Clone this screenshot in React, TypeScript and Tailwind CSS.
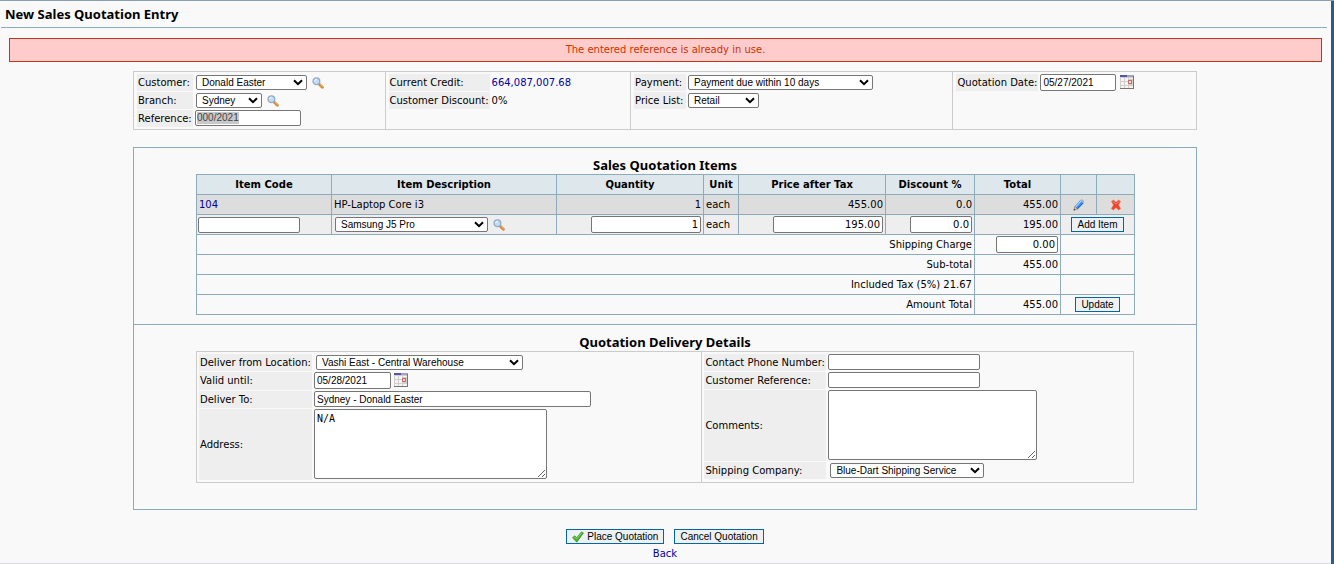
import React from 'react';

const FIELD =
  'block rounded-[2px] border border-[#767676] bg-white px-0.5 text-[10px] leading-3 text-black outline-none';
const SANS = "font-['Liberation_Sans',Arial,sans-serif]";
const TD = 'border border-[#8cacbb] px-0.5 py-0';

function SearchIcon() {
  return (
    <svg width="12" height="12" viewBox="0 0 12 12" aria-hidden="true">
      <path d="M7 7l3.4 3.3" stroke="#d08a35" strokeWidth="2.8" strokeLinecap="round" />
      <path d="M7.8 7l3 2.9" stroke="#f3c27a" strokeWidth="0.9" />
      <circle cx="4.4" cy="4.2" r="3.4" fill="#c3dcf6" stroke="#93abc8" strokeWidth="1.3" />
      <path d="M2.8 4a1.8 1.8 0 0 1 1.8-1.7" stroke="#fff" strokeWidth="0.9" fill="none" />
    </svg>
  );
}

function CalendarIcon() {
  return (
    <svg width="14" height="14" viewBox="0 0 14 14" shapeRendering="crispEdges" aria-hidden="true">
      <rect width="14" height="14" fill="#d3cfcd" />
      <path d="M1 3h3v3H1zM5 3h3v3H5zM9 3h4v1H9zM1 7h3v3H1zM5 7h3v3H5zM1 11h3v2H1zM5 11h3v2H5zM9 11h4v2H9z" fill="#f6f4f3" />
      <rect width="7" height="2" fill="#5454ae" />
      <rect x="7" width="7" height="2" fill="#a2a2b8" />
      <rect x="8" y="5" width="4" height="4" fill="#c4716d" />
      <rect x="9" y="6" width="2" height="2" fill="#f6dcd8" />
      <path d="M13 1h1v13H0v-1h13z" fill="#77736f" />
    </svg>
  );
}

function PencilIcon() {
  return (
    <svg width="12" height="12" viewBox="0 0 12 12" aria-hidden="true">
      <path d="M.9 11.1l1-3.9L4.8 10z" fill="#e3bd92" stroke="#77736f" strokeWidth="0.6" />
      <path d="M1.8 7.3L7.2 1.2l3.4 3L4.8 10.2z" fill="#3b8ee8" />
      <path d="M2.8 7.9l5.4-6" stroke="#a5d6fb" strokeWidth="1.2" />
      <path d="M4.4 9.9l5.8-6" stroke="#1e5fae" strokeWidth="0.9" />
      <path d="M7.2 1.2l.8-.7q.8-.6 1.7.2l1 .9q.8.8.2 1.6l-.5.8z" fill="#9fb0d6" />
      <path d="M.6 11.5l.5-1.8 1.3 1.2z" fill="#333" />
    </svg>
  );
}

function DeleteIcon() {
  return (
    <svg width="12" height="12" viewBox="0 0 12 12" aria-hidden="true">
      <path
        d="M1.3 2.3l2.2-1.4L6 3.2l2.5-2.3 2.2 1.4L8.6 6l2.2 3.7-2.2 1.4L6 8.8l-2.6 2.3L1.2 9.7 3.4 6z"
        fill="#e9452a"
        stroke="#f08a72"
        strokeWidth="0.6"
      />
      <path d="M2.6 2.4L6 5l3.4-2.6" stroke="#f9a08c" strokeWidth="0.7" fill="none" />
    </svg>
  );
}

function CheckIcon() {
  return (
    <svg width="12" height="12" viewBox="0 0 12 12" aria-hidden="true">
      <path d="M.5 6.6l2.4-1.8 1.7 1.9L9.4.9l2.1 1-6.7 9.3z" fill="#45b52e" stroke="#2a7d1b" strokeWidth="0.6" />
      <path d="M1.8 6.7l1-.7 1.7 1.9L9.7 2" stroke="#93dd7c" strokeWidth="0.8" fill="none" />
    </svg>
  );
}

function Select({ id, width, children, label }: { id: string; width: string; children: string; label?: string }) {
  return (
    <span className={`relative block ${width}`}>
      <select
        id={id}
        aria-label={label}
        className={`block h-[15px] w-full appearance-none rounded-[2px] border border-[#767676] bg-white pr-4 pl-[5px] text-[10px] leading-[13px] text-black ${SANS}`}
      >
        <option>{children}</option>
      </select>
      <svg className="pointer-events-none absolute top-[4px] right-[4px]" width="10" height="7" viewBox="0 0 10 7" aria-hidden="true">
        <path d="M1 1.2l4 4 4-4" stroke="#000" strokeWidth="2" fill="none" />
      </svg>
    </span>
  );
}

function Row({ id, label, width, height = 'h-[17px]', children }: {
  id?: string;
  label: string;
  width: string;
  height?: string;
  children: React.ReactNode;
}) {
  return (
    <div className={`flex items-center gap-0.5 ${height}`}>
      <label htmlFor={id} className={`flex h-full shrink-0 items-center bg-[#eeeeee] pl-px whitespace-nowrap ${width}`}>
        {label}
      </label>
      {children}
    </div>
  );
}

function IconButton({ label, children }: { label: string; children: React.ReactNode }) {
  return (
    <button type="button" aria-label={label} className="block cursor-pointer">
      {children}
    </button>
  );
}

function PushButton({ children }: { children: React.ReactNode }) {
  return (
    <button
      type="button"
      className={`inline-flex h-[15px] items-center gap-[3px] border border-[#0066a4] bg-[#edf1f4] px-[5px] align-middle text-[10px] leading-[13px] whitespace-nowrap text-black ${SANS}`}
    >
      {children}
    </button>
  );
}

function Heading({ children }: { children: string }) {
  return (
    <h2 className="text-center font-['Noto_Sans',sans-serif] text-[13px] leading-4 font-bold text-black">{children}</h2>
  );
}

function NumberField({ label, value, width }: { label: string; value: string; width: string }) {
  return <input aria-label={label} defaultValue={value} className={`${FIELD} ml-auto h-[17px] text-right ${width}`} />;
}

function OrderHeader() {
  return (
    <section className="mx-auto mt-[9px] grid w-4/5 grid-cols-[251fr_246fr_323fr_244fr] border border-[#cccccc]">
      <div className="flex flex-col gap-px px-[3px] py-0.5">
        <Row id="customer" label="Customer:" width="w-[56px]">
          <div className="flex items-center gap-[5px] pl-px">
            <Select id="customer" width="w-[111px]">Donald Easter</Select>
            <IconButton label="Search customers"><SearchIcon /></IconButton>
          </div>
        </Row>
        <Row id="branch" label="Branch:" width="w-[56px]">
          <div className="flex items-center gap-[5px] pl-px">
            <Select id="branch" width="w-[66px]">Sydney</Select>
            <IconButton label="Search branches"><SearchIcon /></IconButton>
          </div>
        </Row>
        <Row id="reference" label="Reference:" width="w-[56px]">
          <div className={`flex h-4 w-[106px] items-center self-start rounded-[2px] border border-[#767676] bg-white px-px ${SANS}`}>
            <input id="reference" defaultValue="000/2021" className="h-3 w-[42px] bg-[#c8c8c8] text-[10px] leading-3 text-[#444444] outline-none" />
          </div>
        </Row>
      </div>
      <div className="flex flex-col gap-px border-l border-[#cccccc] px-[3px] py-0.5">
        <Row label="Current Credit:" width="w-[101px]">
          <a href="#credit" className="text-[#0000a0]">664,087,007.68</a>
        </Row>
        <Row label="Customer Discount:" width="w-[101px]">
          <span>0%</span>
        </Row>
      </div>
      <div className="flex flex-col gap-px border-l border-[#cccccc] px-[3px] py-0.5">
        <Row id="payment" label="Payment:" width="w-[52px]">
          <Select id="payment" width="w-[185px]">Payment due within 10 days</Select>
        </Row>
        <Row id="pricelist" label="Price List:" width="w-[52px]">
          <Select id="pricelist" width="w-[71px]">Retail</Select>
        </Row>
      </div>
      <div className="flex flex-col gap-px border-l border-[#cccccc] px-[3px] py-0.5">
        <Row id="quotedate" label="Quotation Date:" width="w-[82px]">
          <input id="quotedate" defaultValue="05/27/2021" className={`${FIELD} ${SANS} h-[17px] w-[76px]`} />
          <div className="self-start pt-px pl-0.5"><IconButton label="Pick quotation date"><CalendarIcon /></IconButton></div>
        </Row>
      </div>
    </section>
  );
}

function ItemsTable() {
  const totals = [
    { label: 'Sub-total', value: '455.00' },
    { label: 'Included Tax (5%) 21.67', value: '' },
  ];
  return (
    <table className="w-full table-fixed border-collapse">
      <colgroup>
        <col className="w-[135px]" />
        <col className="w-[225px]" />
        <col className="w-[147px]" />
        <col className="w-[35px]" />
        <col className="w-[147px]" />
        <col className="w-[89px]" />
        <col className="w-[86px]" />
        <col className="w-[36px]" />
        <col className="w-[38px]" />
      </colgroup>
      <thead>
        <tr className="h-5 bg-[#dee7ec]">
          {['Item Code', 'Item Description', 'Quantity', 'Unit', 'Price after Tax', 'Discount %', 'Total', '', ''].map((h, i) => (
            <th key={i} className={`${TD} text-center font-bold whitespace-nowrap`}>{h}</th>
          ))}
        </tr>
      </thead>
      <tbody>
        <tr className="h-5 bg-[#dddddd]">
          <td className={TD}><a href="#104" className="text-[#0000a0]">104</a></td>
          <td className={TD}>HP-Laptop Core i3</td>
          <td className={`${TD} text-right`}>1</td>
          <td className={TD}>each</td>
          <td className={`${TD} text-right`}>455.00</td>
          <td className={`${TD} text-right`}>0.0</td>
          <td className={`${TD} text-right`}>455.00</td>
          <td className={TD}><div className="flex justify-center"><IconButton label="Edit line"><PencilIcon /></IconButton></div></td>
          <td className={TD}><div className="flex justify-center"><IconButton label="Remove line"><DeleteIcon /></IconButton></div></td>
        </tr>
        <tr className="h-5 bg-[#eeeeee]">
          <td className={`${TD} pl-px`}><input aria-label="Item code" className={`${FIELD} h-4 w-[102px]`} /></td>
          <td className={TD}>
            <div className="flex items-center gap-[5px] pl-px">
              <Select id="item" label="Item description" width="w-[153px]">Samsung J5 Pro</Select>
              <IconButton label="Search items"><SearchIcon /></IconButton>
            </div>
          </td>
          <td className={TD}><NumberField label="Quantity" value="1" width="w-[110px]" /></td>
          <td className={TD}>each</td>
          <td className={TD}><NumberField label="Price after tax" value="195.00" width="w-[110px]" /></td>
          <td className={TD}><NumberField label="Discount percent" value="0.0" width="w-[62px]" /></td>
          <td className={`${TD} text-right`}>195.00</td>
          <td className={TD} colSpan={2}><div className="flex justify-center"><PushButton>Add Item</PushButton></div></td>
        </tr>
        <tr className="h-5">
          <td className={`${TD} text-right`} colSpan={6}>Shipping Charge</td>
          <td className={TD}><NumberField label="Shipping charge" value="0.00" width="w-[62px]" /></td>
          <td className={TD} colSpan={2} />
        </tr>
        {totals.map((t) => (
          <tr key={t.label} className="h-5">
            <td className={`${TD} text-right`} colSpan={6}>{t.label}</td>
            <td className={`${TD} text-right`}>{t.value}</td>
            <td className={TD} colSpan={2} />
          </tr>
        ))}
        <tr className="h-5">
          <td className={`${TD} text-right`} colSpan={6}>Amount Total</td>
          <td className={`${TD} text-right`}>455.00</td>
          <td className={TD} colSpan={2}><div className="flex justify-center"><PushButton>Update</PushButton></div></td>
        </tr>
      </tbody>
    </table>
  );
}

function DeliveryDetails() {
  return (
    <div className="grid grid-cols-[506fr_433fr] border border-[#cccccc]">
      <div className="flex flex-col gap-px px-0.5 py-0.5">
        <Row id="location" label="Deliver from Location:" width="w-[113px]">
          <div className="pl-0.5"><Select id="location" width="w-[207px]">Vashi East - Central Warehouse</Select></div>
        </Row>
        <Row id="valid" label="Valid until:" width="w-[113px]" height="h-[18px]">
          <input id="valid" defaultValue="05/28/2021" className={`${FIELD} ${SANS} h-[17px] w-[77px] self-start`} />
          <div className="self-start pt-px pl-px"><IconButton label="Pick expiry date"><CalendarIcon /></IconButton></div>
        </Row>
        <Row id="deliverto" label="Deliver To:" width="w-[113px]">
          <input id="deliverto" defaultValue="Sydney - Donald Easter" className={`${FIELD} ${SANS} h-4 w-[277px] self-start`} />
        </Row>
        <Row id="address" label="Address:" width="w-[113px]" height="h-[71px]">
          <textarea id="address" defaultValue="N/A" className={`${FIELD} h-[70px] w-[233px] resize self-start py-[3px] font-['DejaVu_Sans_Mono',monospace]`} />
        </Row>
      </div>
      <div className="flex flex-col gap-px border-l border-[#cccccc] px-0.5 py-0.5">
        <Row id="phone" label="Contact Phone Number:" width="w-[122px]">
          <input id="phone" className={`${FIELD} ${SANS} h-4 w-[152px] self-start`} />
        </Row>
        <Row id="custref" label="Customer Reference:" width="w-[122px]">
          <input id="custref" className={`${FIELD} ${SANS} h-4 w-[152px] self-start`} />
        </Row>
        <Row id="comments" label="Comments:" width="w-[122px]" height="h-[71px]">
          <textarea id="comments" className={`${FIELD} h-[70px] w-[209px] resize self-start py-[3px] font-['DejaVu_Sans_Mono',monospace]`} />
        </Row>
        <Row id="shipper" label="Shipping Company:" width="w-[122px]">
          <div className="pl-0.5"><Select id="shipper" width="w-[154px]">Blue-Dart Shipping Service</Select></div>
        </Row>
      </div>
    </div>
  );
}

export default function App() {
  return (
    <div className="flex min-h-screen border-t border-[#8c9fae] bg-[#f9f9f9] font-['DejaVu_Sans',Verdana,sans-serif] text-[10px] leading-3 text-black">
      <main className="min-w-0 flex-1 border-b border-[#d5dadf] pr-px">
        <header className="mr-[3px] ml-px flex h-[27px] items-center border-b border-[#8cacbb] pl-1">
          <h1 className="font-['Noto_Sans',sans-serif] text-[13px] leading-4 font-bold">New Sales Quotation Entry</h1>
        </header>
        <div role="alert" className="mt-2.5 mr-2 ml-[9px] flex h-6 items-center justify-center border border-[#b5391a] bg-[#ffcccc] text-[#cc3300]">
          The entered reference is already in use.
        </div>
        <form onSubmit={(e) => e.preventDefault()}>
          <OrderHeader />
          <div className="mx-auto mt-[17px] w-4/5 border border-[#8cacbb]">
            <section className="border-b border-[#8cacbb] px-[62px] pt-[9px] pb-[9px]">
              <Heading>Sales Quotation Items</Heading>
              <div className="pt-px"><ItemsTable /></div>
            </section>
            <section className="px-[62px] pt-[9px] pb-[26px]">
              <Heading>Quotation Delivery Details</Heading>
              <div className="pt-px"><DeliveryDetails /></div>
            </section>
          </div>
          <div className="mt-[19px] flex justify-center gap-2.5">
            <PushButton><CheckIcon />Place Quotation</PushButton>
            <PushButton>Cancel Quotation</PushButton>
          </div>
          <div className="mt-1 text-center"><a href="#back" className="text-[#0000a0]">Back</a></div>
        </form>
      </main>
      <div className="w-[3px] shrink-0 bg-[#2c5b86]" />
    </div>
  );
}
